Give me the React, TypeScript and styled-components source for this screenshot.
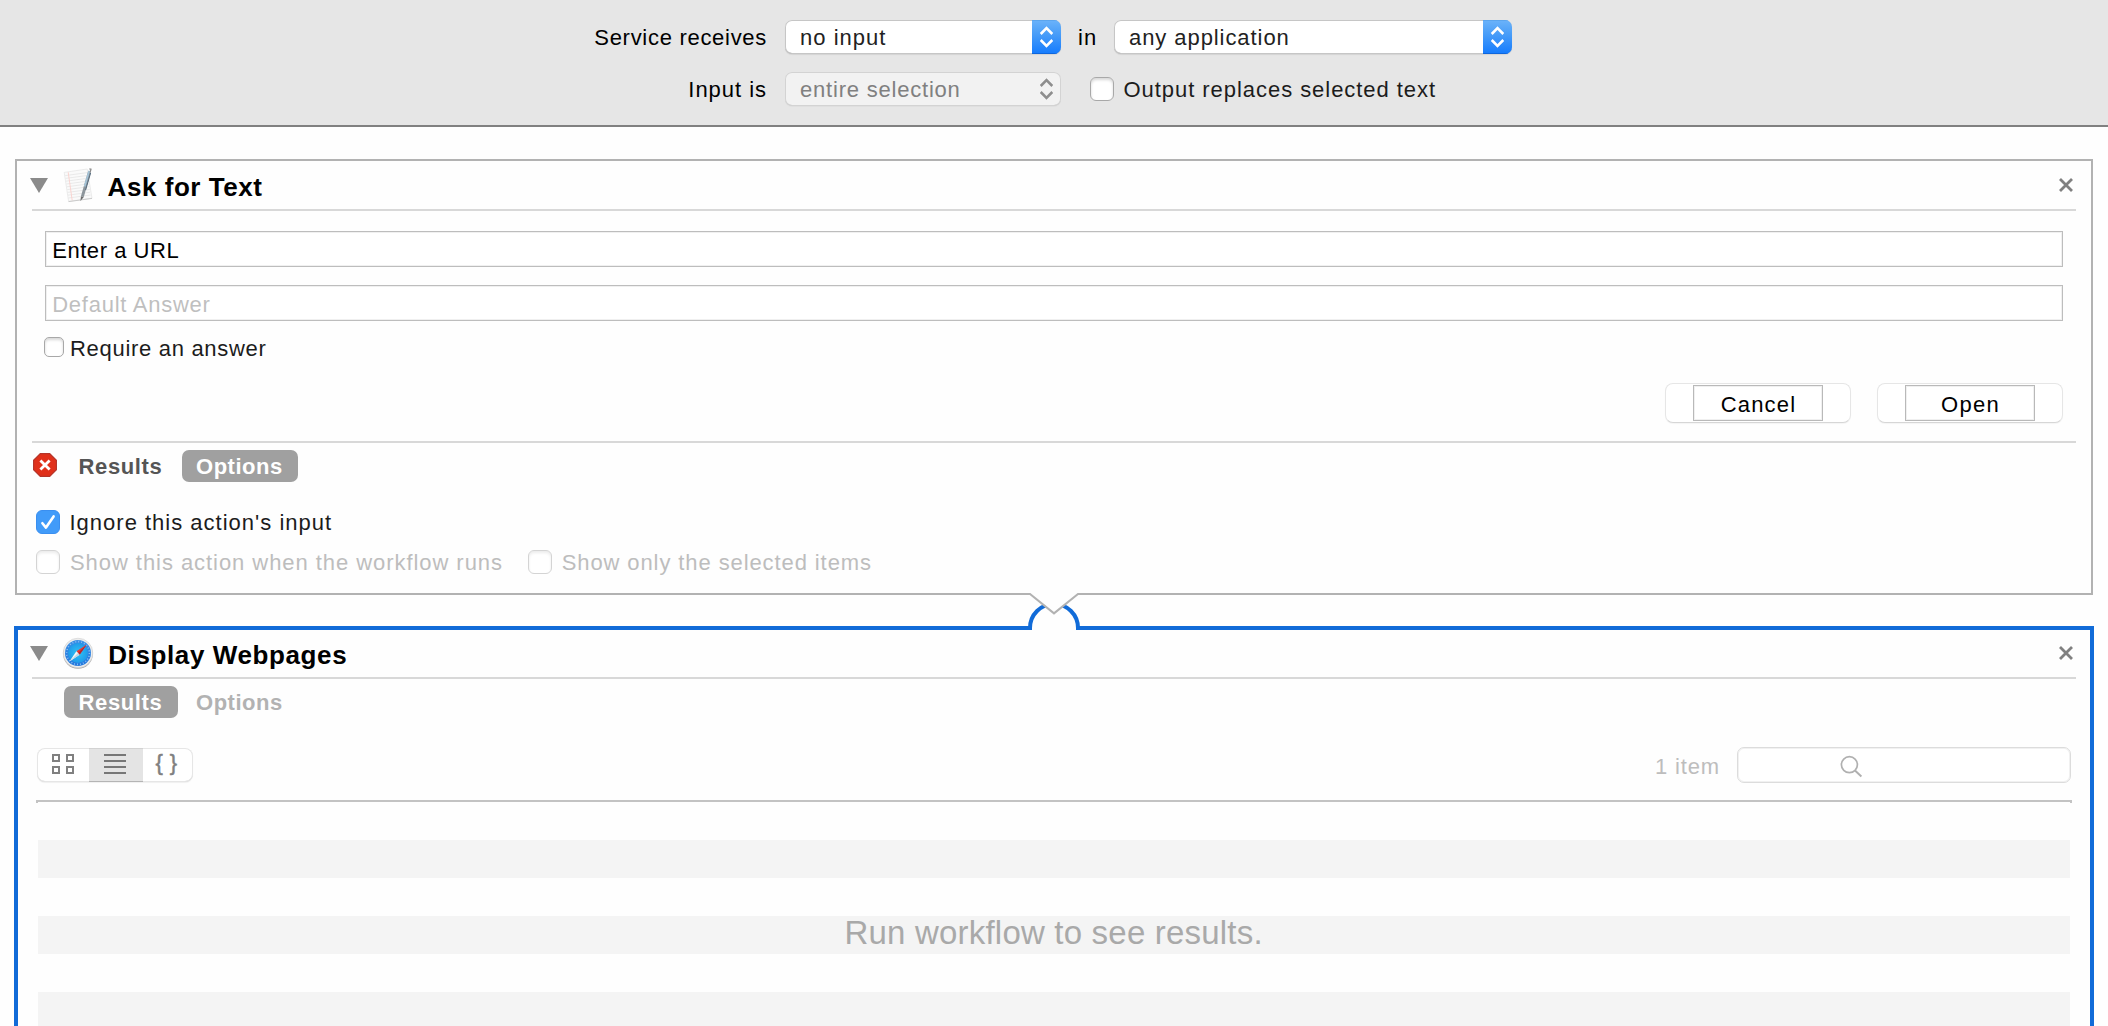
import React from "react";
import styled, { createGlobalStyle, css } from "styled-components";

const GlobalStyle = createGlobalStyle`
  * { box-sizing: border-box; }
  body {
    margin: 0;
    background: #fff;
    font-family: "Liberation Sans", Arial, Helvetica, sans-serif;
    overflow: hidden;
  }
`;

const Window = styled.div`
  width: 2108px;
  height: 1026px;
  overflow: hidden;
  display: flex;
  flex-direction: column;
  background: #fefefe;
`;

const Text = styled.span<{ $ls?: number; $color?: string; $bold?: boolean }>`
  flex: none;
  display: block;
  font-size: 22px;
  line-height: 25px;
  white-space: pre;
  font-weight: ${(p) => (p.$bold ? 700 : 400)};
  letter-spacing: ${(p) => p.$ls ?? 0.8}px;
  color: ${(p) => p.$color ?? "#000"};
`;

/* ---------- service header ---------- */

const ServiceBar = styled.header`
  flex: none;
  height: 127px;
  padding-top: 20px;
  display: flex;
  flex-direction: column;
  gap: 18px;
  background: #e6e6e6;
  border-bottom: 2px solid #808080;
`;

const ServiceRow = styled.div`
  display: flex;
  height: 34px;
  align-items: flex-start;
`;

const ServiceLabel = styled.div`
  width: 785px;
  padding: 5px 18px 0 0;
  display: flex;
  justify-content: flex-end;
`;

const Joiner = styled.div`
  width: 53px;
  padding: 5px 0 0 17px;
`;

const OutputOption = styled.div`
  padding: 5px 0 0 29px;
`;

const SelectBox = styled.div<{ $width: number; $disabled?: boolean }>`
  width: ${(p) => p.$width}px;
  height: 34px;
  display: flex;
  justify-content: space-between;
  padding-left: 15px;
  border-radius: 7px;
  overflow: hidden;
  background: ${(p) => (p.$disabled ? "#f2f2f2" : "#fff")};
  box-shadow: inset 0 0 0 1px ${(p) => (p.$disabled ? "#d3d3d3" : "#c6c6c6")},
    inset 0 -1px 0 ${(p) => (p.$disabled ? "#c8c8c8" : "#a6a6a6")},
    0 1px 1px ${(p) => (p.$disabled ? "rgba(0,0,0,.03)" : "rgba(0,0,0,.08)")};
`;

const SelectValue = styled.div`
  padding-top: 5px;
`;

const Stepper = styled.div<{ $disabled?: boolean }>`
  width: 29px;
  height: 34px;
  color: ${(p) => (p.$disabled ? "#8e8e8e" : "#fff")};
  ${(p) =>
    !p.$disabled &&
    css`
      background: linear-gradient(#6cb3fa, #4a9ef8 40%, #147bfe);
      box-shadow: inset 0 1px 0 #5ba5ee, inset 0 -1px 0 #0f66dc;
    `}
  svg { display: block; }
`;

/* ---------- checkbox ---------- */

const CheckRow = styled.div<{ $gap: number; $size: number }>`
  display: flex;
  gap: ${(p) => p.$gap}px;
  height: ${(p) => p.$size}px;
`;

const CheckLabel = styled.div<{ $lift?: number }>`
  margin-top: ${(p) => -(p.$lift ?? 0)}px;
`;

const Box = styled.span<{ $size: number; $on?: boolean; $dim?: boolean }>`
  flex: none;
  width: ${(p) => p.$size}px;
  height: ${(p) => p.$size}px;
  border-radius: ${(p) => (p.$size > 20 ? 6 : 5)}px;
  border: 1px solid ${(p) => (p.$on ? "#3a8ff0" : p.$dim ? "#d4d4d4" : "#a8a8a8")};
  background: ${(p) => (p.$on ? "#419bf9" : "#fff")};
  box-shadow: ${(p) => (p.$on ? "none" : `inset 0 2px 3px ${p.$dim ? "rgba(0,0,0,.08)" : "rgba(0,0,0,.16)"}`)};
  svg { display: block; margin: -1px; }
`;

/* ---------- action cards ---------- */

const Card = styled.section<{ $selected?: boolean }>`
  flex: none;
  display: flex;
  flex-direction: column;
  background: #fefefe;
  ${(p) =>
    p.$selected
      ? css`
          margin: 0 14px;
          height: 420px;
          border: 4px solid #116bd8;
          padding: 0 14px;
        `
      : css`
          margin: 32px 15px 0;
          height: 436px;
          border: 2px solid #b2b2b2;
          padding: 0 15px;
        `}
`;

const CardHeader = styled.div<{ $h: number }>`
  flex: none;
  height: ${(p) => p.$h}px;
  display: flex;
  align-items: flex-start;
  border-bottom: 2px solid #d8d8d8;
`;

const Disclosure = styled.svg<{ $top: number }>`
  flex: none;
  margin: ${(p) => p.$top}px 0 0 -2px;
`;

const AppIcon = styled.svg<{ $top: number }>`
  flex: none;
  margin: ${(p) => p.$top}px 0 0 14px;
`;

const Title = styled.h2<{ $top: number; $left: number; $ls: number }>`
  flex: 1;
  margin: ${(p) => p.$top}px 0 0 ${(p) => p.$left}px;
  font-size: 26px;
  line-height: 30px;
  font-weight: 700;
  letter-spacing: ${(p) => p.$ls}px;
  color: #000;
`;

const Close = styled.svg<{ $top: number }>`
  flex: none;
  margin: ${(p) => p.$top}px 2px 0 0;
`;

const Form = styled.div`
  height: 232px;
  padding: 20px 13px 0;
  border-bottom: 2px solid #d8d8d8;
  display: flex;
  flex-direction: column;
`;

const Field = styled.div`
  height: 36px;
  margin-bottom: 18px;
  padding: 6px 0 0 6.2px;
  border: 1px solid #bdbdbd;
  box-shadow: inset 0 0 0 1px #f0f0f0;
  background: #fff;
`;

const RequireRow = styled.div`
  margin: -2px 0 0 -1px;
`;

const Buttons = styled.div`
  display: flex;
  justify-content: flex-end;
  gap: 26px;
  margin-top: 26px;
`;

const PushButton = styled.div`
  width: 186px;
  height: 40px;
  padding-top: 1px;
  display: flex;
  justify-content: center;
  border-radius: 8px;
  border: 1px solid #e6e6e6;
  border-bottom-color: #d6d6d6;
  box-shadow: 0 1px 1px rgba(0, 0, 0, 0.04);
  background: #fff;
`;

const ButtonName = styled.div`
  width: 130px;
  height: 36px;
  padding: 6px 0 0 1px;
  display: flex;
  justify-content: center;
  border: 1px solid #b9b9b9;
  box-shadow: inset 0 0 0 1px #f0f0f0;
`;

const Tabs = styled.div<{ $top: number }>`
  display: flex;
  align-items: flex-start;
  height: 32px;
  margin-top: ${(p) => p.$top}px;
`;

const TabLead = styled.div`
  width: 32px;
  padding: 3px 0 0 1px;
  svg { display: block; }
`;

const Tab = styled.div<{ $active?: boolean; $width: number; $pad?: number }>`
  width: ${(p) => p.$width}px;
  height: 32px;
  padding: 4px 0 0 ${(p) => p.$pad ?? 14.5}px;
  border-radius: 7px;
  background: ${(p) => (p.$active ? "#a0a0a0" : "transparent")};
`;

const OptionList = styled.div`
  display: flex;
  flex-direction: column;
  gap: 16px;
  padding: 28px 0 0 4px;
`;

const OptionRow = styled.div`
  display: flex;
`;

const OptionCell = styled.div<{ $width: number }>`
  width: ${(p) => p.$width}px;
`;

/* ---------- connector ---------- */

const Connector = styled.div`
  flex: none;
  position: relative;
  height: 31px;
  z-index: 1;
  svg { position: absolute; left: 1024px; top: -4px; }
`;

/* ---------- results ---------- */

const ResultBar = styled.div`
  display: flex;
  height: 36px;
  margin: 29px 5px 0;
`;

const Segments = styled.div`
  flex: none;
  display: flex;
  width: 156px;
  height: 34px;
  margin-top: 1px;
  border-radius: 8px;
  overflow: hidden;
  background: #fff;
  box-shadow: inset 0 0 0 1px #e6e6e6, inset 0 -1px 0 #d2d2d2, 0 1px 1px rgba(0, 0, 0, 0.06);
`;

const Segment = styled.div<{ $width: number; $active?: boolean }>`
  width: ${(p) => p.$width}px;
  height: 34px;
  display: flex;
  ${(p) =>
    p.$active &&
    css`
      background: #e4e4e4;
      box-shadow: inset 0 1px 0 #d2d2d2, inset 0 -1px 0 #b4b4b4;
    `}
`;

const Braces = styled.span`
  margin: 2px 0 0 12.5px;
  font-size: 22px;
  line-height: 25px;
  letter-spacing: 7px;
  color: #808080;
  -webkit-text-stroke: 0.5px #808080;
`;

const ItemCount = styled.div`
  flex: 1;
  padding: 7px 17px 0 0;
  display: flex;
  justify-content: flex-end;
`;

const Search = styled.div`
  width: 334px;
  height: 36px;
  border-radius: 7px;
  border: 1px solid #dcdcdc;
  box-shadow: inset 0 0 0 1px #f1f1f1;
  background: #fff;
  padding: 7px 0 0 101px;
  svg { display: block; }
`;

const Rule = styled.div`
  height: 3px;
  margin: 17px 4px 0;
  border: solid #c3c3c3;
  border-width: 2px 2px 0;
`;

const Stripes = styled.div`
  flex: none;
  margin: 0 6px;
  padding-top: 37px;
  display: flex;
  flex-direction: column;
  gap: 38px;
`;

const Stripe = styled.div`
  height: 38px;
  background: #f4f4f4;
`;

const Placeholder = styled.div`
  margin: -2px 0 0 806.5px;
  font-size: 33px;
  line-height: 37px;
  letter-spacing: 0.2px;
  color: #a9a9a9;
  white-space: nowrap;
`;

/* ---------- parts ---------- */

function Select({ width, value, ls, disabled }: { width: number; value: string; ls: number; disabled?: boolean }) {
  return (
    <SelectBox $width={width} $disabled={disabled}>
      <SelectValue>
        <Text $ls={ls} $color={disabled ? "#808080" : "#222"}>{value}</Text>
      </SelectValue>
      <Stepper $disabled={disabled}>
        <svg width="29" height="34" fill="none" stroke="currentColor" strokeWidth="2.6">
          <path d="M8.7 14 14.5 8.2 20.3 14M8.7 20 14.5 25.8 20.3 20" />
        </svg>
      </Stepper>
    </SelectBox>
  );
}

type CheckProps = { label: string; ls: number; size?: number; gap?: number; lift?: number; on?: boolean; dim?: boolean };

function Check({ label, ls, size = 24, gap = 10, lift, on, dim }: CheckProps) {
  return (
    <CheckRow $gap={gap} $size={size}>
      <Box $size={size} $on={on} $dim={dim}>
        {on && (
          <svg width="24" height="24" fill="none" stroke="#fff" strokeWidth="2.6" strokeLinecap="round" strokeLinejoin="round">
            <path d="M6.4 13.2 10 17.6 17.6 6.4" />
          </svg>
        )}
      </Box>
      <CheckLabel $lift={lift}>
        <Text $ls={ls} $color={dim ? "#bdbdbd" : "#1c1c1c"}>{label}</Text>
      </CheckLabel>
    </CheckRow>
  );
}

function Triangle({ top }: { top: number }) {
  return (
    <Disclosure $top={top} width="18" height="15">
      <path d="M0 0H18L9 15Z" fill="#8b8b8b" />
    </Disclosure>
  );
}

function CloseButton({ top }: { top: number }) {
  return (
    <Close $top={top} width="16" height="16" stroke="#808080" strokeWidth="2.8">
      <path d="M2 2 14 14M14 2 2 14" />
    </Close>
  );
}

function NoteIcon() {
  return (
    <AppIcon $top={6} width="32" height="36" fill="none">
      <path d="M2.2 5.4 25.2 2 30 31.2 6.6 34.4Z" fill="#fafafa" stroke="#e4e4e4" strokeWidth=".7" />
      <g stroke="#e4e4e4" strokeWidth=".8">
        <path d="M3.2 8.6 25.4 5.6M3.6 11.4 25.8 8.4M4 14.2 26.2 11.2M4.4 17 26.6 14M4.8 19.8 27 16.8M5.2 22.6 27.4 19.6M5.6 25.4 27.8 22.4M6 28.2 28.2 25.2M6.4 31 28.6 28" />
      </g>
      <path d="M6.2 5.2 10.2 33.4" stroke="#fad0cc" strokeWidth=".9" />
      <path d="M6.6 34.6 30 31.4" stroke="#cbcbcb" strokeWidth="1" />
      <path d="M27.6 4.4 20.4 29.5" stroke="#8d959b" strokeWidth="2.9" />
      <path d="M27.2 3.8 22.6 19.5" stroke="#a5c4d8" strokeWidth="1.7" />
      <path d="M28.6 6 23.6 23" stroke="#566c7e" strokeWidth="1" />
      <path d="M27.4 1.8 29 2.2 28.2 5" stroke="#8a8a8a" strokeWidth="1.2" />
      <path d="M19 29.2 21.8 30 18.4 34Z" fill="#6a6a6a" />
    </AppIcon>
  );
}

function CompassIcon() {
  return (
    <AppIcon $top={7} width="32" height="33">
      <defs>
        <linearGradient id="dial" x1="0" y1="0" x2="0" y2="1">
          <stop offset="0" stopColor="#3b8fe6" />
          <stop offset="1" stopColor="#2478dd" />
        </linearGradient>
        <radialGradient id="glow">
          <stop offset="0" stopColor="#30c4f4" />
          <stop offset="1" stopColor="#209ae9" />
        </radialGradient>
      </defs>
      <circle cx="16" cy="17" r="14.8" fill="#a9a9a9" />
      <circle cx="16" cy="16" r="14.8" fill="#ededed" stroke="#cfcfcf" strokeWidth=".6" />
      <circle cx="16" cy="16" r="13" fill="url(#dial)" />
      <circle cx="16" cy="16" r="10" fill="url(#glow)" />
      <circle cx="16" cy="16" r="11.4" fill="none" stroke="#8cc4f3" strokeWidth="1.6" strokeDasharray=".9 2.08" />
      <path d="M24.6 7.8 14.4 14.3 17.6 17.7Z" fill="#ee3a30" />
      <path d="M7.4 24.6 14.4 14.3 17.6 17.7Z" fill="#f7f7f7" />
      <path d="M24.6 7.8 16 16 17.6 17.7Z" fill="#b32730" />
      <path d="M7.4 24.6 16 16 17.6 17.7Z" fill="#c4d6e2" />
    </AppIcon>
  );
}

function StopIcon() {
  return (
    <svg width="24" height="24">
      <path d="M7.3 .6H16.7L23.4 7.3V16.7L16.7 23.4H7.3L.6 16.7V7.3Z" fill="#e0301a" stroke="#b5352a" strokeWidth="1.2" />
      <path d="M7.4 7.4 16.6 16.6M16.6 7.4 7.4 16.6" stroke="#fff" strokeWidth="2.8" />
    </svg>
  );
}

export default function App() {
  return (
    <Window>
      <GlobalStyle />
      <ServiceBar>
        <ServiceRow>
          <ServiceLabel><Text $ls={0.707}>Service receives</Text></ServiceLabel>
          <Select width={276} value="no input" ls={1.018} />
          <Joiner><Text $ls={1.1}>in</Text></Joiner>
          <Select width={398} value="any application" ls={0.93} />
        </ServiceRow>
        <ServiceRow>
          <ServiceLabel><Text $ls={0.967}>Input is</Text></ServiceLabel>
          <Select width={276} value="entire selection" ls={0.791} disabled />
          <OutputOption><Check ls={0.953} gap={9.5} label="Output replaces selected text" /></OutputOption>
        </ServiceRow>
      </ServiceBar>

      <Card>
        <CardHeader $h={50}>
          <Triangle top={17} />
          <NoteIcon />
          <Title $top={11} $left={13.6} $ls={0.548}>Ask for Text</Title>
          <CloseButton top={16} />
        </CardHeader>
        <Form>
          <Field><Text $ls={0.548}>Enter a URL</Text></Field>
          <Field><Text $ls={0.75} $color="#bfbfbf">Default Answer</Text></Field>
          <RequireRow><Check size={20} gap={6} lift={1} ls={0.698} label="Require an answer" /></RequireRow>
          <Buttons>
            <PushButton><ButtonName><Text $ls={1.15}>Cancel</Text></ButtonName></PushButton>
            <PushButton><ButtonName><Text $ls={1.25}>Open</Text></ButtonName></PushButton>
          </Buttons>
        </Form>
        <Tabs $top={7}>
          <TabLead><StopIcon /></TabLead>
          <Tab $width={118}><Text $bold $ls={0.627} $color="#555">Results</Text></Tab>
          <Tab $width={116} $pad={14} $active><Text $bold $ls={0.522} $color="#fff">Options</Text></Tab>
        </Tabs>
        <OptionList>
          <Check on ls={1.002} gap={9.5} label="Ignore this action's input" />
          <OptionRow>
            <OptionCell $width={492}><Check dim ls={0.942} label="Show this action when the workflow runs" /></OptionCell>
            <Check dim ls={0.903} gap={9.7} label="Show only the selected items" />
          </OptionRow>
        </OptionList>
      </Card>

      <Connector>
        <svg width="60" height="42" fill="none">
          <path d="M6 39V37A24 24 0 0 1 54 37V39" fill="#fefefe" stroke="#116bd8" strokeWidth="4" />
          <path d="M6 1.8V3L30 22.4 54 3V1.8Z" fill="#fefefe" />
          <path d="M5 3H6L30 22.4 54 3H55" stroke="#b2b2b2" strokeWidth="2" />
        </svg>
      </Connector>

      <Card $selected>
        <CardHeader $h={49}>
          <Triangle top={16} />
          <CompassIcon />
          <Title $top={10} $left={14.2} $ls={0.613}>Display Webpages</Title>
          <CloseButton top={15} />
        </CardHeader>
        <Tabs $top={7}>
          <TabLead />
          <Tab $width={114} $active><Text $bold $ls={0.627} $color="#fff">Results</Text></Tab>
          <Tab $width={120} $pad={18}><Text $bold $ls={0.522} $color="#b2b2b2">Options</Text></Tab>
        </Tabs>
        <ResultBar>
          <Segments>
            <Segment $width={52}>
              <svg width="52" height="34" fill="none" stroke="#808080" strokeWidth="2">
                <path d="M16 7H22V13H16ZM30 7H36V13H30ZM16 19H22V25H16ZM30 19H36V25H30Z" />
              </svg>
            </Segment>
            <Segment $width={54} $active>
              <svg width="54" height="34" stroke="#777" strokeWidth="2">
                <path d="M15 7H37M15 13H37M15 19H37M15 25H37" />
              </svg>
            </Segment>
            <Segment $width={50}><Braces>{"{}"}</Braces></Segment>
          </Segments>
          <ItemCount><Text $ls={0.843} $color="#bdbdbd">1 item</Text></ItemCount>
          <Search>
            <svg width="26" height="26" fill="none" stroke="#b0b0b0" strokeWidth="1.7">
              <circle cx="10.4" cy="9.7" r="8" />
              <path d="M16 15.4 22.4 21.4" strokeWidth="2" />
            </svg>
          </Search>
        </ResultBar>
        <Rule />
        <Stripes>
          <Stripe />
          <Stripe><Placeholder>Run workflow to see results.</Placeholder></Stripe>
          <Stripe />
        </Stripes>
      </Card>
    </Window>
  );
}
